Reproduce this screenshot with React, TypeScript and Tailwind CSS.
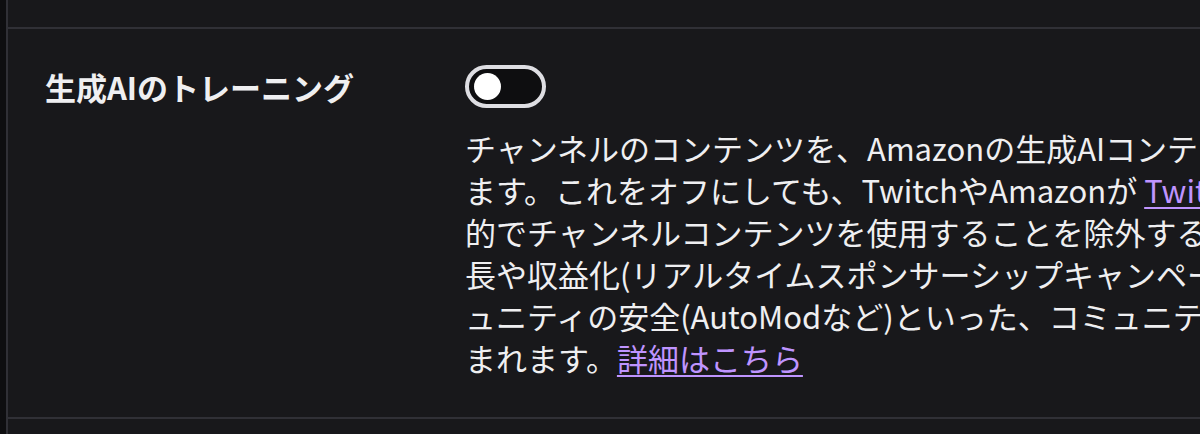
const descriptionLines: { text: string; link?: string; after?: string }[] = [
  { text: "チャンネルのコンテンツを、Amazonの生成AIコンテンツのトレーニングに使用することを許可し" },
  { text: "ます。これをオフにしても、TwitchやAmazonが ", link: "Twitchサービス規約", after: " で認められたその他の目" },
  { text: "的でチャンネルコンテンツを使用することを除外するものではありません。これには、チャンネルの成" },
  { text: "長や収益化(リアルタイムスポンサーシップキャンペーンなど)のためのツールや、コミ" },
  { text: "ュニティの安全(AutoModなど)といった、コミュニティやクリエイターの機能の提供が含" },
  { text: "まれます。", link: "詳細はこちら" },
];

function Toggle({ checked = false }: { checked?: boolean }) {
  return (
    <button
      type="button"
      role="switch"
      aria-checked={checked}
      className="flex h-[43px] w-[81px] items-center rounded-full border-[4px] border-[#dedee3] bg-[#0e0e10] px-[5px]"
    >
      <span className="block h-[27px] w-[27px] rounded-full bg-white" />
    </button>
  );
}

export default function App() {
  return (
    <div
      className="flex h-[434px] w-full overflow-hidden bg-[#18181b] text-[#efeff1]"
      style={{ fontFamily: '"Noto Sans CJK JP", "Noto Sans", sans-serif' }}
    >
      {/* side nav edge */}
      <div className="w-[6px] shrink-0 bg-[#0e0e10]" />

      <div className="flex min-w-0 flex-1 flex-col border-l-2 border-[#303036]">
        <div className="h-[27px] shrink-0" />

        <div className="flex shrink-0 border-y-2 border-[#303036] pb-[38px] pl-[37px] pt-[36px]">
          <div className="w-[420px] shrink-0">
            <h3 className="text-[31px] font-bold leading-[43px]">生成AIのトレーニング</h3>
          </div>

          <div className="flex min-w-0 flex-1 flex-col">
            <Toggle />
            <p className="mt-[19px] text-[31px] leading-[42px]">
              {descriptionLines.map((line) => (
                <span key={line.text} className="block whitespace-nowrap">
                  {line.text}
                  {line.link && (
                    <a href="#" className="text-[#bf94ff] underline decoration-2 underline-offset-[4px]">
                      {line.link}
                    </a>
                  )}
                  {line.after}
                </span>
              ))}
            </p>
          </div>
        </div>

        <div className="flex-1" />
      </div>
    </div>
  );
}
